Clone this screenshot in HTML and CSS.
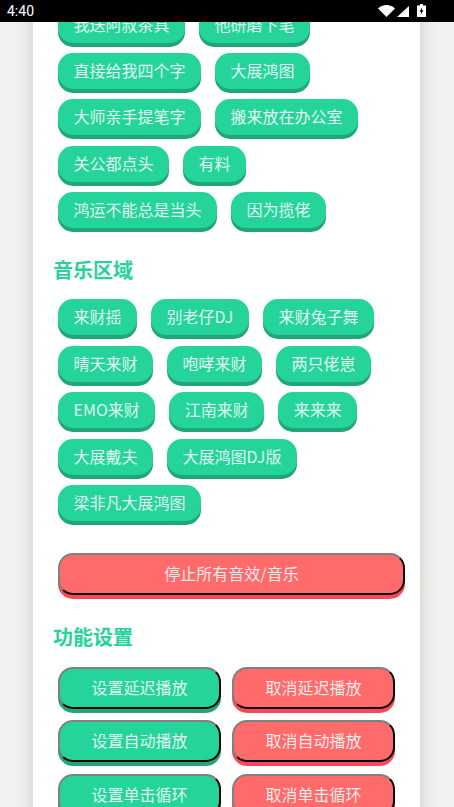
FILE: index.html
```html
<!DOCTYPE html>
<html lang="zh">
<head>
<meta charset="utf-8">
<title>音效</title>
<link rel="stylesheet" href="styles.css">
</head>
<body>
<div class="page">
  <header class="status">
    <span class="time">4:40</span>
    <span class="status-icons">
      <svg class="i-wifi" width="17" height="12" viewBox="0 0 17 12"><path d="M0 3.6C2.2 1.4 5.2 0 8.5 0s6.300 1.400 8.500 3.600L8.500 12z" fill="#fff"/></svg>
      <svg class="i-signal" width="12" height="11" viewBox="0 0 12 11"><path d="M12 0v11H0z" fill="#fff"/></svg>
      <svg class="i-battery" width="9" height="13" viewBox="0 0 9 13"><path d="M3 0h3v1.500h3V13H0V1.500h3z" fill="#fff"/><path d="M5 3.500 2.500 7.500H4L3.700 10.500 6.500 6.300H4.800z" fill="#000"/></svg>
    </span>
  </header>
  <main class="scroller">
    <div class="card">
      <div class="chips first">
        <button class="chip">我送阿叔茶具</button>
        <button class="chip">他研磨下笔</button>
        <button class="chip">直接给我四个字</button>
        <button class="chip">大展鸿图</button>
        <button class="chip">大师亲手提笔字</button>
        <button class="chip">搬来放在办公室</button>
        <button class="chip">关公都点头</button>
        <button class="chip">有料</button>
        <button class="chip">鸿运不能总是当头</button>
        <button class="chip">因为揽佬</button>
      </div>
      <h2 class="title">音乐区域</h2>
      <div class="chips">
        <button class="chip">来财摇</button>
        <button class="chip">别老仔DJ</button>
        <button class="chip">来财兔子舞</button>
        <button class="chip">晴天来财</button>
        <button class="chip">咆哮来财</button>
        <button class="chip">两只佬崽</button>
        <button class="chip">EMO来财</button>
        <button class="chip">江南来财</button>
        <button class="chip">来来来</button>
        <button class="chip">大展戴夫</button>
        <button class="chip">大展鸿图DJ版</button>
        <button class="chip">梁非凡大展鸿图</button>
      </div>
      <button class="action red stop">停止所有音效/音乐</button>
      <h2 class="title">功能设置</h2>
      <div class="settings">
        <button class="action green">设置延迟播放</button>
        <button class="action red">取消延迟播放</button>
        <button class="action green">设置自动播放</button>
        <button class="action red">取消自动播放</button>
        <button class="action green">设置单击循环</button>
        <button class="action red">取消单击循环</button>
      </div>
    </div>
  </main>
</div>
</body>
</html>
```
FILE: styles.css
```css
* { box-sizing: border-box; }
html, body { margin: 0; padding: 0; height: 100%; overflow: hidden; }
body {
  font-family: "Noto Sans CJK SC", "Noto Sans", sans-serif;
  background: #f0f2ef;
}
.page { display: flex; flex-direction: column; height: 807px; }
.status {
  flex: 0 0 22px;
  background: #000;
  color: #fff;
  display: flex;
  align-items: center;
  justify-content: space-between;
  padding: 0 28px 0 7px;
  position: relative;
  z-index: 2;
}
.time { font: 400 14px/22px Roboto, sans-serif; }
.status-icons { display: flex; align-items: center; gap: 2px; }
.i-battery { margin-left: 6px; margin-top: -2px; }
.scroller { flex: 1; overflow: hidden; }
.card {
  width: 387px;
  margin: -15.500px 0 0 33px;
  padding: 0 15px 0 20px;
  background: #fff;
  box-shadow: 0 0 16px rgba(0, 0, 0, .17);
}
.chips {
  display: flex;
  flex-wrap: wrap;
  gap: 10.450px 14px;
  padding-left: 5px;
}
button {
  font-family: inherit;
  cursor: pointer;
  color: rgba(255, 255, 255, .88);
  font-size: 16px;
  line-height: 1;
}
.chip {
  height: 36px;
  padding: 0 15.500px 2px;
  border: 0;
  border-radius: 15px;
  background: #25d49a;
  box-shadow: 0 4px 0 #20a67b;
}
.title {
  margin: 28px 0 15px;
  font-size: 20px;
  line-height: 28px;
  font-weight: 700;
  color: #25d49a;
}
.action {
  height: 42px;
  padding: 0 6px 2px;
  border: 2px outset #2b2b2b;
  border-color: #808080 #2a2a2a #2a2a2a #808080;
  border-radius: 15px;
}
.stop { display: block; width: 347px; margin: 31.700px 0 0 5px; }
.red { background: #ff6b6b; box-shadow: 0 4px 0 #ff4757; }
.green { background: #25d49a; box-shadow: 0 4px 0 #20a67b; }
.settings {
  display: grid;
  grid-template-columns: 163px 163px;
  gap: 11.700px 11px;
  padding: 1px 0 20px 5px;
}
```
